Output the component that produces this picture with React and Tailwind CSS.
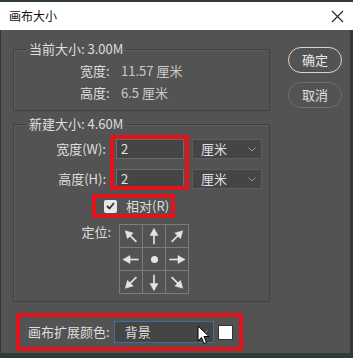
import React from 'react';

const font = { fontFamily: '"Noto Sans CJK SC", "Noto Sans", sans-serif' };

// arrow pointing up inside a 23x23 cell, rotated per direction
function Arrow({ deg }) {
    return (
        <svg width="23" height="23" viewBox="0 0 23 23">
            <g transform={`rotate(${deg} 11.5 11.5)`} fill="#e4e4e4" stroke="#e4e4e4">
                <line x1="11.5" y1="19.5" x2="11.5" y2="9" strokeWidth="1.7" />
                <polygon points="11.5,3 7.3,10.5 15.7,10.5" strokeWidth="0.5" />
            </g>
        </svg>
    );
}

const CELLS = [-45, 0, 45, -90, null, 90, -135, 180, 135];

function Chevron() {
    return (
        <svg width="8" height="5" viewBox="0 0 8 5">
            <polyline points="0.5,0.5 4,4 7.5,0.5" fill="none" stroke="#9a9a9a" strokeWidth="1" />
        </svg>
    );
}

function UnitSelect() {
    return (
        <div className="w-[70px] h-[20px] bg-[#454545] border border-[#5c5c5c] flex items-center justify-between pl-[8px] pr-[5px] text-[13px] text-[#dedede]">
            <span>厘米</span>
            <Chevron />
        </div>
    );
}

function NumInput({ value }) {
    return (
        <div className="w-[68px] h-[20px] bg-[#454545] border border-[#6a6a6a] flex items-center pl-[4px] text-[13px] text-[#e6e6e6]">
            {value}
        </div>
    );
}

export default function App() {
    return (
        <div className="w-[353px] h-[358px] bg-[#2e3a3c] pt-[2px] overflow-hidden" style={font}>
            <div className="h-[28px] bg-white flex items-center justify-between pl-[9px] pr-[9px]">
                <span className="text-[12px] text-[#111]">画布大小</span>
                <svg width="13" height="13" viewBox="0 0 13 13">
                    <path d="M1 1 L12 12 M12 1 L1 12" stroke="#222" strokeWidth="1.1" />
                </svg>
            </div>

            <div className="relative ml-[1px] mr-[3px] h-[323px] bg-[#535353] flex pl-[12px] pt-[11px] text-[13px] text-[#dedede]">
                <div className="w-[257px] flex flex-col">
                    <fieldset className="border border-[#404040] shadow-[inset_1px_1px_0_#5c5c5c] pb-[6px]">
                        <legend className="ml-[12px] px-[3px] leading-[16px]">当前大小: 3.00M</legend>
                        <div className="pt-[3px] pl-[66px]">
                            <div className="h-[22px] flex items-center">
                                <span className="w-[41px]">宽度:</span>
                                <span className="text-[#c9c9c9]">11.57 厘米</span>
                            </div>
                            <div className="h-[22px] flex items-center">
                                <span className="w-[41px]">高度:</span>
                                <span className="text-[#c9c9c9]">6.5 厘米</span>
                            </div>
                        </div>
                    </fieldset>

                    <fieldset className="mt-[5px] border border-[#404040] shadow-[inset_1px_1px_0_#5c5c5c] pb-[7px]">
                        <legend className="ml-[12px] px-[3px] leading-[16px]">新建大小: 4.60M</legend>
                        <div className="relative pt-[7px] flex flex-col gap-[10px]">
                            <div className="h-[20px] flex items-center">
                                <span className="w-[92px] text-right whitespace-nowrap">宽度(W):</span>
                                <div className="ml-[10px]"><NumInput value="2" /></div>
                                <div className="ml-[8px]"><UnitSelect /></div>
                            </div>
                            <div className="h-[20px] flex items-center">
                                <span className="w-[92px] text-right whitespace-nowrap">高度(H):</span>
                                <div className="ml-[10px]"><NumInput value="2" /></div>
                                <div className="ml-[8px]"><UnitSelect /></div>
                            </div>
                            {/* highlight over both inputs */}
                            <div className="absolute left-[96px] top-[3px] w-[79px] h-[55px] border-4 border-[#e3131b]" />
                        </div>

                        <div className="mt-[5px] pl-[78px]">
                            <div className="w-[83px] h-[24px] border-4 border-[#e3131b] flex items-center pl-[8px]">
                                <div className="w-[13px] h-[13px] bg-[#e8e8e8] rounded-[2px] flex items-center justify-center">
                                    <svg width="9" height="8" viewBox="0 0 9 8">
                                        <polyline points="1,4 3.5,6.5 8,1" fill="none" stroke="#333" strokeWidth="1.8" />
                                    </svg>
                                </div>
                                <span className="ml-[9px]">相对(R)</span>
                            </div>
                        </div>

                        <div className="mt-[6px] flex">
                            <span className="w-[97px] text-right leading-[16px]">定位:</span>
                            <div className="ml-[8px] grid grid-cols-3 border-t border-l border-[#7c7c7c]">
                                {CELLS.map((deg, i) => (
                                    <div key={i} className="w-[23px] h-[23px] border-r border-b border-[#7c7c7c] flex items-center justify-center">
                                        {deg === null ? (
                                            <div className="w-[7px] h-[7px] rounded-full bg-[#e4e4e4]" />
                                        ) : (
                                            <Arrow deg={deg} />
                                        )}
                                    </div>
                                ))}
                            </div>
                        </div>
                    </fieldset>

                    <div className="mt-[11px] ml-[3px] w-[227px] h-[38px] border-4 border-[#e3131b] flex items-center pl-[8px]">
                        <span>画布扩展颜色:</span>
                        <div className="ml-[4px] w-[100px] h-[22px] bg-[#454545] border border-[#3b6fa8] flex items-center justify-between pl-[10px] pr-[5px]">
                            <span>背景</span>
                            <Chevron />
                        </div>
                        <div className="ml-[4px] w-[15px] h-[15px] bg-white border border-[#333]" />
                    </div>
                </div>

                <div className="ml-[18px] pt-[6px] flex flex-col gap-[9px]">
                    <div className="w-[54px] h-[26px] rounded-full border-[1.5px] border-[#d6d6d6] flex items-center justify-center text-[#e8e8e8]">确定</div>
                    <div className="w-[54px] h-[26px] rounded-full border border-[#6e6e6e] flex items-center justify-center text-[#e0e0e0]">取消</div>
                </div>

                {/* mouse cursor */}
                <svg className="absolute left-[196px] top-[295px]" width="14" height="20" viewBox="0 0 14 20">
                    <path d="M1 1 L1 16 L4.5 12.5 L7 18.5 L9.5 17.5 L7 11.5 L12 11.5 Z" fill="#fff" stroke="#000" strokeWidth="1" strokeLinejoin="round" />
                </svg>
            </div>
        </div>
    );
}
